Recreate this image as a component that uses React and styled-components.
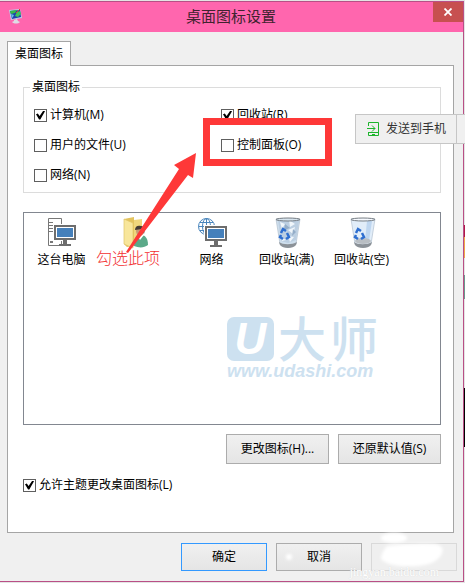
import React from "react";
import styled, { createGlobalStyle } from "styled-components";

const GlobalStyle = createGlobalStyle`
  * {
    box-sizing: border-box;
  }
  body {
    margin: 0;
    background: #f0f0f0;
    color: #000;
    font-family: "Open Sans", "Noto Sans CJK SC", sans-serif;
    font-size: 12px;
    line-height: 18px;
  }
`;

const Desktop = styled.div`
  padding: 1px 1px 1px 0;
  background: linear-gradient(
    #e4e4e4 225px,
    #b01848 225px 237px,
    #f0a848 237px 258px,
    #e4e4e4 258px 275px,
    #6a9a8c 275px 299px,
    #e4e4e4 299px 388px,
    #000 388px 447px,
    #e4e4e4 447px
  );
`;

const Dialog = styled.div`
  position: relative;
  border: solid #b94f86;
  border-width: 1px 1px 1px 0;
  background: #f0f0f0;
`;

const TitleBar = styled.header`
  display: flex;
  align-items: flex-start;
  height: 30px;
  padding-left: 8px;
  background: #ff66ae;
`;

const Title = styled.h1`
  flex: 1;
  margin: 0;
  padding-left: 6px;
  text-align: center;
  font-size: 15px;
  font-weight: 400;
  line-height: 28px;
  color: #40232f;
`;

const AppIcon = styled.svg`
  width: 15px;
  height: 16px;
  margin-top: 6px;
`;

const CloseButton = styled.button`
  display: grid;
  place-items: center;
  width: 30px;
  height: 20px;
  padding: 0;
  border: 0;
  background: #c75050;
`;

const Body = styled.main`
  padding: 9px 9px 10px 7px;
`;

const Tab = styled.button`
  display: block;
  position: relative;
  z-index: 1;
  height: 25px;
  margin-bottom: -1px;
  padding: 0 7px;
  border: 1px solid #a5a5a5;
  border-bottom: 0;
  background: #fff;
  font: inherit;
`;

const Panel = styled.section`
  padding: 12px 12px 38px 15px;
  border: 1px solid #a5a5a5;
  background: #fff;
`;

const Group = styled.fieldset`
  display: grid;
  grid-template-columns: 187px 1fr;
  row-gap: 12px;
  margin: 0 0 19px;
  padding: 10px 10px 8px;
  border: 1px solid #dcdcdc;
`;

const Legend = styled.legend`
  margin-left: -4px;
  padding: 0 2px;
`;

const CheckLabel = styled.label`
  position: relative;
  display: flex;
  align-items: center;
  justify-self: start;
  gap: 3px;
  grid-column: ${({ $column }) => $column};

  input {
    appearance: none;
    display: grid;
    place-items: center;
    width: 13px;
    height: 13px;
    margin: 0;
    border: 1px solid #5f5f5f;
    background: #fff;
  }
  input:checked::after {
    content: "";
    width: 9px;
    height: 9px;
    background: #000;
    clip-path: polygon(0 42%, 20% 34%, 40% 60%, 82% 0, 100% 8%, 48% 100%, 34% 100%);
  }
`;

const Highlight = styled.span`
  position: absolute;
  inset: -18px -31px -12px -18px;
  border: 7px solid #fe3838;
  pointer-events: none;
`;

const IconList = styled.ul`
  position: relative;
  display: flex;
  height: 213px;
  margin: 0 0 9px;
  padding: 4px 0 0;
  border: 1px solid #828790;
  list-style: none;
`;

const IconItem = styled.li`
  display: flex;
  flex-direction: column;
  align-items: center;
  gap: 2px;
  width: 75px;

  svg {
    width: 32px;
    height: 32px;
  }
`;

const Watermark = styled.div`
  position: absolute;
  top: 104px;
  left: 203px;
  color: #cde1f0;
`;

const Brand = styled.div`
  display: flex;
  align-items: center;
  gap: 4px;
  height: 44px;
  font-size: 48px;
  font-weight: 500;
  line-height: 44px;
`;

const BrandBadge = styled.span`
  display: grid;
  justify-items: center;
  width: 47px;
  height: 44px;
  border-radius: 7px;
  background: #cde1f0;
  color: #fff;
  font: italic 700 44px/44px "Liberation Sans", sans-serif;
`;

const Site = styled.div`
  margin-top: 1px;
  font: italic 700 18px/18px "Liberation Sans", sans-serif;
`;

const ButtonRow = styled.div`
  display: flex;
  justify-content: flex-end;
  gap: 9px;
`;

const Button = styled.button`
  width: ${({ $wide }) => ($wide ? "103px" : "86px")};
  height: ${({ $wide }) => ($wide ? "30px" : "28px")};
  padding: 0;
  border: 1px solid ${({ $primary }) => ($primary ? "#3399ff" : "#acacac")};
  background: linear-gradient(#f0f0f0, #e5e5e5);
  color: #000;
  font: inherit;

  &:disabled {
    border-color: #d9d9d9;
    background: #efefef;
  }
`;

const ThemeOption = styled.div`
  margin-top: 12px;
`;

const Footer = styled.footer`
  position: relative;
  display: flex;
  justify-content: flex-end;
  gap: 9px;
  margin: 10px -3px 0 0;
`;

const Smudge = styled.svg`
  position: absolute;
  right: 0;
  bottom: -10px;
  width: 190px;
  height: 50px;
  pointer-events: none;
`;

const SourceMark = styled.span`
  position: absolute;
  right: 18px;
  bottom: -8px;
  color: #fff;
  font: 12px/14px "Liberation Serif", serif;
  text-shadow: 0 0 1px #ccc;
  pointer-events: none;
`;

const Arrow = styled.svg`
  position: absolute;
  top: 148px;
  left: 120px;
  width: 80px;
  height: 110px;
  pointer-events: none;
`;

const Note = styled.span`
  position: absolute;
  top: 245px;
  left: 96px;
  color: #f23030;
  font: 300 16px/20px "Noto Sans CJK SC", sans-serif;
`;

const SendButton = styled.button`
  position: absolute;
  top: 112px;
  right: -2px;
  display: flex;
  align-items: center;
  gap: 6px;
  height: 30px;
  padding: 0 0 0 11px;
  border: 1px solid #c6c6c6;
  border-right: 0;
  background: #f0f0f0;
  color: #333;
  font: inherit;

  &::after {
    content: "";
    align-self: stretch;
    width: 8px;
    margin-left: 4px;
    border-left: 1px solid #c6c6c6;
  }
`;

function Checkbox({ label, checked, column, highlighted }) {
  return (
    <CheckLabel $column={column}>
      <input type="checkbox" defaultChecked={checked} />
      {label}
      {highlighted && <Highlight />}
    </CheckLabel>
  );
}

function Monitor() {
  return (
    <>
      <path d="M8 7h24v17H8z" fill="#fff" />
      <path d="M9 8h22v15H9z" fill="#6d6d6d" />
      <path d="M11 10h18v11H11z" fill="#fff" />
      <path d="M12 11h16v9H12z" fill="#4580bb" />
      <path d="M18 23h4v4h4v2H14v-2h4z" fill="#6d6d6d" />
    </>
  );
}

function ComputerIcon() {
  return (
    <svg viewBox="1 0 32 32" aria-hidden="true">
      <path d="M3.500 1.500h13v27h-13z" fill="#fff" stroke="#777" />
      <path d="M4 5.500h4M4 8.500h4M4 11.500h4M4 14.500h4" stroke="#777" />
      <path d="M5 24h3v2H5z" fill="#777" />
      <Monitor />
    </svg>
  );
}

function NetworkIcon() {
  return (
    <svg viewBox="0 0 32 32" aria-hidden="true">
      <g fill="none" stroke="#4a86bd">
        <circle cx="10.500" cy="9.500" r="8" />
        <ellipse cx="10.500" cy="9.500" rx="4" ry="8" />
        <path d="M10.500 1.500v16M2.500 9.500h16M4 5.500h13M4 13.500h13" />
      </g>
      <g transform="translate(0 1)">
        <Monitor />
      </g>
    </svg>
  );
}

function UserFolderIcon() {
  return (
    <svg viewBox="1 0 32 32" aria-hidden="true">
      <path d="M4 2l10-2v4h6v23L7 30l-3-3z" fill="#e3c35d" />
      <path d="M4 2l9 4v25l-9-4z" fill="#f8e69b" stroke="#dfc468" strokeWidth=".7" />
      <path d="M14 3l8-1v24l-8 3z" fill="#efd77d" />
      <path d="M14 29c0-8 3-11 7-11s7 3 7 10c-4 3-9 3-14 1z" fill="#5ba989" />
      <path d="M17 18l3 5 4-5z" fill="#fff" />
      <ellipse cx="20" cy="14" rx="4" ry="5" fill="#c89b77" />
      <path d="M15 13c0-4 3-5 6-4 4 0 4 5 3 8l-2-5z" fill="#433b35" />
    </svg>
  );
}

function BinIcon({ full }) {
  return (
    <svg viewBox="-1 0 32 32" aria-hidden="true">
      <path d="M4 2h24l-4 25c-1 4-15 4-16 0z" fill={full ? "#cfdfed" : "#e1edf9"} stroke="#b3c2d0" strokeWidth=".7" />
      {full ? (
        <g>
          <path d="M6 3l5-2 4 2 6-2 6 3-3 19-8 3-7-2z" fill="#bccfe2" />
          <path d="M8 5l5 2-3 5zM17 3l6 4-5 3zM16 13l7-3-2 7zM16 19l6 1-4 5zM9 20l5 3-4 1z" fill="#f0f6fb" />
          <path d="M13 7l5 4-6 2zM21 12l3 3-4 4z" fill="#94adc8" />
        </g>
      ) : (
        <path d="M20 4h5l-3 20h-4z" fill="#bed6f0" />
      )}
      <path d="M7 25c4 3 13 3 18 0l-1 3c-3 4-13 4-16 0z" fill="#8c9298" />
      {!full && <ellipse cx="16" cy="24" rx="8" ry="3" fill="#b9bec3" />}
      <ellipse cx="16" cy="2.500" rx="12" ry="1.500" fill={full ? "#d8e5ef" : "#f7faff"} stroke="#777e85" />
      <path
        d="M9 16l2-4 3 2M15 16l2 4-3 2M11 22l-3-2 1-2"
        fill="none"
        stroke="#2f6fd0"
        strokeWidth="2.500"
      />
    </svg>
  );
}

const icons = [
  { label: "这台电脑", icon: <ComputerIcon /> },
  { label: "", icon: <UserFolderIcon /> },
  { label: "网络", icon: <NetworkIcon /> },
  { label: "回收站(满)", icon: <BinIcon full /> },
  { label: "回收站(空)", icon: <BinIcon /> },
];

function App() {
  return (
    <Desktop>
      <GlobalStyle />
      <Dialog>
        <TitleBar>
          <AppIcon viewBox="0 0 15 16" aria-hidden="true">
            <path d="M1 2l11-1 2 9-11 2z" fill="#b8d0e6" />
            <path d="M2 3l10-1 1 7-9 2z" fill="#1f3fae" />
            <path d="M2 3l7-1-2 3-4 1z" fill="#35b94a" />
            <path d="M7 8l2-4 3-1 1 3-3 3z" fill="#3fc35a" />
            <path d="M8 5l4-4" stroke="#d8452f" />
            <path d="M3 6l3 1-1 2-1 1z" fill="#62bfe3" />
            <path d="M6 12l3-1 1 2 2 1c-2 2-6 2-8 0l2-1z" fill="#dedbe4" />
          </AppIcon>
          <Title>桌面图标设置</Title>
          <CloseButton aria-label="关闭">
            <svg width="8" height="8" viewBox="0 0 8 8" aria-hidden="true">
              <path d="M.5 .5l7 7M7.500 .5l-7 7" stroke="#fff" strokeWidth="1.800" />
            </svg>
          </CloseButton>
        </TitleBar>
        <Body>
          <Tab>桌面图标</Tab>
          <Panel>
            <Group>
              <Legend>桌面图标</Legend>
              <Checkbox label="计算机(M)" checked column={1} />
              <Checkbox label="回收站(R)" checked column={2} />
              <Checkbox label="用户的文件(U)" column={1} />
              <Checkbox label="控制面板(O)" column={2} highlighted />
              <Checkbox label="网络(N)" column={1} />
            </Group>
            <IconList>
              {icons.map(({ label, icon }, index) => (
                <IconItem key={index}>
                  {icon}
                  {label}
                </IconItem>
              ))}
              <Watermark>
                <Brand>
                  <BrandBadge>U</BrandBadge>
                  <span>大</span>
                  <span>师</span>
                </Brand>
                <Site>www.udashi.com</Site>
              </Watermark>
            </IconList>
            <ButtonRow>
              <Button $wide>更改图标(H)...</Button>
              <Button $wide>还原默认值(S)</Button>
            </ButtonRow>
            <ThemeOption>
              <Checkbox label="允许主题更改桌面图标(L)" checked />
            </ThemeOption>
          </Panel>
          <Footer>
            <Button $primary>确定</Button>
            <Button>取消</Button>
            <Button disabled aria-label="应用" />
            <Smudge viewBox="0 0 190 50" aria-hidden="true">
              <defs>
                <filter id="soft">
                  <feGaussianBlur stdDeviation="1.500" />
                </filter>
              </defs>
              <g fill="#fff" filter="url(#soft)">
                <ellipse cx="127" cy="7" rx="13" ry="5" />
                <path d="M120 15q24-3 48-2 10 2 7 9-4 11-24 13-28 2-37-7 0-6 6-13z" />
                <circle cx="22" cy="26" r="3" />
              </g>
            </Smudge>
            <SourceMark>jingyan.baidu.com</SourceMark>
          </Footer>
        </Body>
        <Note>勾选此项</Note>
        <Arrow viewBox="120 150 80 110" aria-hidden="true">
          <path d="M196 153l-22 12 5 4-53 83 2 1 60-78 5 3z" fill="#fe3838" />
        </Arrow>
        <SendButton>
          <svg width="13" height="14" viewBox="0 0 13 14" fill="none" stroke="#1cb52c" aria-hidden="true">
            <path d="M1.500 4V.5h10v13h-10V10M1.500 10.500h10M0 6.500h8M5 3.500l3 3-3 3M5 12.500h3" />
          </svg>
          发送到手机
        </SendButton>
      </Dialog>
    </Desktop>
  );
}

export default App;
